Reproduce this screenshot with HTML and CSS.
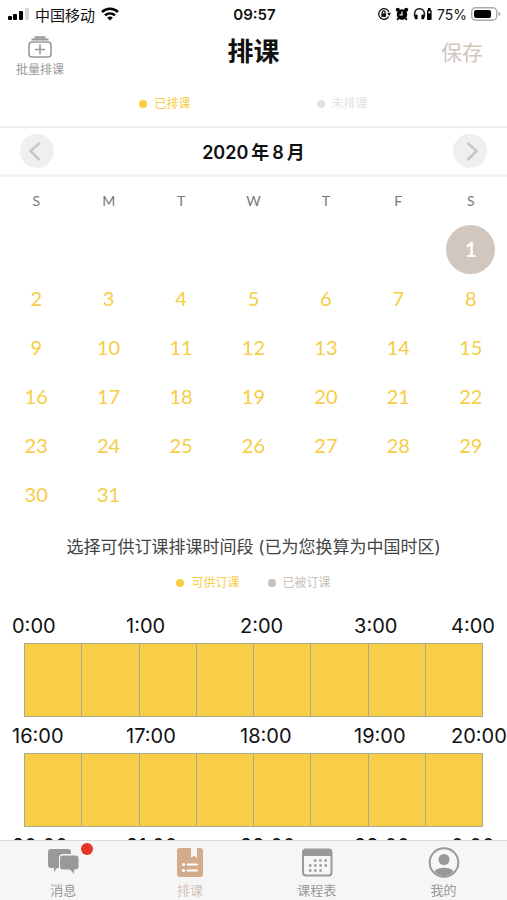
FILE: index.html
```
<!DOCTYPE html>
<html lang="zh-CN">
<head>
    <meta charset="UTF-8">
    <meta name="viewport" content="width=device-width, initial-scale=1.0">
    <title>排课</title>
    <link rel="stylesheet" href="styles.css">
</head>
<body>
    <div class="status-bar">
        <div class="status-left">
            <svg width="21" height="13" viewBox="0 0 21 13">
                <rect x="0" y="8" width="4" height="4" rx="1"/>
                <rect x="5" y="6" width="4" height="6" rx="1"/>
                <rect x="11" y="3" width="4" height="9" rx="1"/>
                <rect x="17" y="0" width="4" height="12" rx="1" fill="#d8d8d8"/>
            </svg>
            <span>中国移动</span>
            <svg width="18" height="14" viewBox="0 0 18 14" fill="none" stroke="#000" stroke-width="2.500">
                <path d="M1 5C5.500 .6 12.500 .6 17 5"/>
                <path d="M4 8.400c2.900-2.700 7.100-2.700 10 0"/>
                <path d="M9 13.500 6.200 10.700c1.600-1.500 4-1.500 5.600 0z" fill="#000" stroke="none"/>
            </svg>
        </div>
        <div class="status-time">09:57</div>
        <div class="status-right">
            <svg width="14" height="14" viewBox="0 0 14 14" fill="none" stroke="#111" stroke-width="1.300">
                <path d="M11.700 9.500A5.300 5.300 0 1 1 11.900 5"/>
                <path d="m10 6 4-.3-1.800 3.300z" fill="#111" stroke="none"/>
                <rect x="4.300" y="6.300" width="4.800" height="3.600" fill="#111" stroke="none"/>
                <path d="M5.300 6.500V5.300a1.400 1.400 0 0 1 2.800 0v1.200"/>
            </svg>
            <svg width="14" height="14" viewBox="0 0 14 14">
                <circle cx="7" cy="7.500" r="5.200"/>
                <circle cx="2.800" cy="2.800" r="2"/>
                <circle cx="11.200" cy="2.800" r="2"/>
                <path d="m3.500 11-1.300 2M10.500 11l1.300 2" stroke="#000" stroke-width="1.600"/>
                <path d="M7 4.500v3.300H4.500" fill="none" stroke="#fff" stroke-width="1.200"/>
            </svg>
            <svg width="20" height="14" viewBox="0 0 20 14">
                <path d="M3.500 12C.3 9 .8 1.800 6.500 1.800S12.700 9 9.500 12" fill="none" stroke="#222" stroke-width="1.500"/>
                <rect x="2" y="7.500" width="2.600" height="4.800" rx="1"/>
                <rect x="8.400" y="7.500" width="2.600" height="4.800" rx="1"/>
                <rect x="14" y="3" width="4.600" height="10" rx="1"/>
                <rect x="15" y="1" width="2.600" height="2.500"/>
                <rect x="15.300" y="4.300" width="2" height="2" fill="#fff"/>
            </svg>
            <span>75%</span>
            <svg width="30" height="14" viewBox="0 0 30 14">
                <rect x=".7" y=".7" width="25" height="12.600" rx="4" fill="none" stroke="#aaa" stroke-width="1.400"/>
                <rect x="3" y="3" width="17" height="8" rx="2"/>
                <path d="M27.500 4.500c2.400.8 2.400 4.200 0 5z" fill="#aaa"/>
            </svg>
        </div>
    </div>

    <header class="header">
        <button type="button" class="batch-btn">
            <svg width="24" height="22" viewBox="0 0 24 22" fill="none" stroke="#999" stroke-width="1.600">
                <rect x="1" y="6" width="22" height="15" rx="3"/>
                <path d="M3.500 3.600h17M6.500 1.200h11" stroke-width="2"/>
                <path d="M12 8.500v10M7 13.500h10"/>
            </svg>
            <span>批量排课</span>
        </button>
        <h1>排课</h1>
        <button type="button" class="save-btn">保存</button>
    </header>

    <main class="content">
        <div class="legend legend-days">
            <span class="legend-item open">已排课</span>
            <span class="legend-item empty">未排课</span>
        </div>

        <div class="month-nav">
            <button type="button" class="nav-btn" aria-label="上个月">
                <svg width="34" height="34" viewBox="0 0 34 34" fill="none" stroke="#c6c6c6" stroke-width="2.500">
                    <path d="m19.500 9-9 8 9 9"/>
                </svg>
            </button>
            <h2><span>2020</span><span>年</span><span>8</span><span>月</span></h2>
            <button type="button" class="nav-btn" aria-label="下个月">
                <svg width="34" height="34" viewBox="0 0 34 34" fill="none" stroke="#c6c6c6" stroke-width="2.500">
                    <path d="m14.500 9 9 8-9 9"/>
                </svg>
            </button>
        </div>

        <table class="calendar">
            <thead>
                <tr><th>S</th><th>M</th><th>T</th><th>W</th><th>T</th><th>F</th><th>S</th></tr>
            </thead>
            <tbody>
                <tr>
                    <td></td><td></td><td></td><td></td><td></td><td></td>
                    <td><button type="button" class="day selected">1</button></td>
                </tr>
                <tr>
                    <td><button type="button" class="day">2</button></td>
                    <td><button type="button" class="day">3</button></td>
                    <td><button type="button" class="day">4</button></td>
                    <td><button type="button" class="day">5</button></td>
                    <td><button type="button" class="day">6</button></td>
                    <td><button type="button" class="day">7</button></td>
                    <td><button type="button" class="day">8</button></td>
                </tr>
                <tr>
                    <td><button type="button" class="day">9</button></td>
                    <td><button type="button" class="day">10</button></td>
                    <td><button type="button" class="day">11</button></td>
                    <td><button type="button" class="day">12</button></td>
                    <td><button type="button" class="day">13</button></td>
                    <td><button type="button" class="day">14</button></td>
                    <td><button type="button" class="day">15</button></td>
                </tr>
                <tr>
                    <td><button type="button" class="day">16</button></td>
                    <td><button type="button" class="day">17</button></td>
                    <td><button type="button" class="day">18</button></td>
                    <td><button type="button" class="day">19</button></td>
                    <td><button type="button" class="day">20</button></td>
                    <td><button type="button" class="day">21</button></td>
                    <td><button type="button" class="day">22</button></td>
                </tr>
                <tr>
                    <td><button type="button" class="day">23</button></td>
                    <td><button type="button" class="day">24</button></td>
                    <td><button type="button" class="day">25</button></td>
                    <td><button type="button" class="day">26</button></td>
                    <td><button type="button" class="day">27</button></td>
                    <td><button type="button" class="day">28</button></td>
                    <td><button type="button" class="day">29</button></td>
                </tr>
                <tr>
                    <td><button type="button" class="day">30</button></td>
                    <td><button type="button" class="day">31</button></td>
                    <td></td><td></td><td></td><td></td><td></td>
                </tr>
            </tbody>
        </table>

        <p class="hint">选择可供订课排课时间段 (已为您换算为中国时区)</p>

        <div class="legend legend-slots">
            <span class="legend-item open">可供订课</span>
            <span class="legend-item booked">已被订课</span>
        </div>

        <section class="slot-group">
            <div class="hours">
                <span>0:00</span><span>1:00</span><span>2:00</span><span>3:00</span><span>4:00</span>
            </div>
            <div class="slots">
                <button type="button" aria-label="0:00"></button>
                <button type="button" aria-label="0:30"></button>
                <button type="button" aria-label="1:00"></button>
                <button type="button" aria-label="1:30"></button>
                <button type="button" aria-label="2:00"></button>
                <button type="button" aria-label="2:30"></button>
                <button type="button" aria-label="3:00"></button>
                <button type="button" aria-label="3:30"></button>
            </div>
        </section>

        <section class="slot-group">
            <div class="hours">
                <span>16:00</span><span>17:00</span><span>18:00</span><span>19:00</span><span>20:00</span>
            </div>
            <div class="slots">
                <button type="button" aria-label="16:00"></button>
                <button type="button" aria-label="16:30"></button>
                <button type="button" aria-label="17:00"></button>
                <button type="button" aria-label="17:30"></button>
                <button type="button" aria-label="18:00"></button>
                <button type="button" aria-label="18:30"></button>
                <button type="button" aria-label="19:00"></button>
                <button type="button" aria-label="19:30"></button>
            </div>
        </section>

        <section class="slot-group">
            <div class="hours">
                <span>20:00</span><span>21:00</span><span>22:00</span><span>23:00</span><span>0:00</span>
            </div>
        </section>
    </main>

    <nav class="tab-bar">
        <a href="#messages" class="tab">
            <span class="tab-icon">
                <svg width="32" height="32" viewBox="0 0 32 32" fill="#999">
                    <path d="M4 2h17a3 3 0 0 1 3 3v2H16a4 4 0 0 0-4 4v10H10l-3 4v-4H4a3 3 0 0 1-3-3V5a3 3 0 0 1 3-3z"/>
                    <path d="M16 8.500h12.500a3 3 0 0 1 3 3v8a3 3 0 0 1-3 3H27v4.500l-4-4.500h-7a3 3 0 0 1-3-3v-8a3 3 0 0 1 3-3z"/>
                </svg>
                <i class="badge"></i>
            </span>
            <span>消息</span>
        </a>
        <a href="#schedule" class="tab active">
            <span class="tab-icon">
                <svg width="32" height="32" viewBox="0 0 32 32">
                    <path d="M6 1h11v10l3-2.500 3 2.500V1h3a3 3 0 0 1 3 3v23a3 3 0 0 1-3 3H6a3 3 0 0 1-3-3V4a3 3 0 0 1 3-3z" fill="#d3ac8b"/>
                    <path d="M13.500 17.500H23M13.500 23.500H23" stroke="#fff" stroke-width="1.800" stroke-linecap="round"/>
                    <circle cx="9.500" cy="17.500" r="1.600" fill="#fff"/>
                    <circle cx="9.500" cy="23.500" r="1.600" fill="#fff"/>
                </svg>
            </span>
            <span>排课</span>
        </a>
        <a href="#timetable" class="tab">
            <span class="tab-icon">
                <svg width="32" height="32" viewBox="0 0 32 32">
                    <rect x="2" y="2.500" width="28.500" height="26" rx="3" fill="none" stroke="#999" stroke-width="2"/>
                    <path d="M2 9V5.500a3 3 0 0 1 3-3h22.500a3 3 0 0 1 3 3V9z" fill="#999"/>
                    <path d="M13 13.500h14M8 18.500h18M8 23.500h14" stroke="#999" stroke-width="2.400" stroke-dasharray="2.400 2.800"/>
                </svg>
            </span>
            <span>课程表</span>
        </a>
        <a href="#mine" class="tab">
            <span class="tab-icon">
                <svg width="32" height="32" viewBox="0 0 32 32">
                    <circle cx="16" cy="15.500" r="14.300" fill="none" stroke="#999" stroke-width="2"/>
                    <circle cx="16" cy="12.500" r="5.500" fill="#999"/>
                    <path d="M6.200 24.200c4.500-4.600 15.100-4.600 19.600 0-4.600 6.300-15 6.300-19.600 0z" fill="#999"/>
                </svg>
            </span>
            <span>我的</span>
        </a>
    </nav>
</body>
</html>
```
FILE: styles.css
```
* {
    margin: 0;
    padding: 0;
    box-sizing: border-box;
}

body {
    font-family: Inter, "Noto Sans CJK SC", sans-serif;
    background: #fff;
    color: #111;
    height: 100vh;
    display: flex;
    flex-direction: column;
    overflow: hidden;
}

button {
    font-family: inherit;
    background: none;
    border: none;
    cursor: pointer;
}

svg {
    display: block;
    flex-shrink: 0;
}

/* status bar */
.status-bar {
    display: grid;
    grid-template-columns: 1fr auto 1fr;
    align-items: center;
    height: 28px;
    padding: 0 6px 0 8px;
    font-size: 15px;
    flex-shrink: 0;
}

.status-left,
.status-right {
    display: flex;
    align-items: center;
    gap: 6px;
}

.status-right {
    justify-content: flex-end;
    gap: 4px;
    font-size: 14px;
}

.status-time {
    font-weight: 600;
}

/* header */
.header {
    display: grid;
    grid-template-columns: 1fr auto 1fr;
    align-items: center;
    height: 56px;
    padding: 0 16px;
    flex-shrink: 0;
}

.header h1 {
    font-size: 26px;
    line-height: 36px;
    font-weight: 700;
    margin-bottom: 8px;
}

.batch-btn {
    justify-self: start;
    display: flex;
    flex-direction: column;
    align-items: center;
    gap: 4px;
    padding-top: 2px;
    font-size: 12px;
    line-height: 16px;
    color: #999;
}

.save-btn {
    justify-self: end;
    margin: 0 8px 6px 0;
    font-size: 21px;
    line-height: 30px;
    color: #cfc6be;
}

.content {
    flex: 1;
    min-height: 0;
    overflow: hidden;
}

/* legends */
.legend {
    display: flex;
    justify-content: center;
    font-size: 12px;
    line-height: 16px;
}

.legend-days {
    gap: 126px;
    padding: 12px 0 14px;
}

.legend-slots {
    gap: 28px;
    padding-bottom: 16px;
}

.legend-item {
    display: flex;
    align-items: center;
    gap: 7px;
}

.legend-item::before {
    content: "";
    width: 8px;
    height: 8px;
    border-radius: 50%;
    background: currentColor;
}

.open {
    color: #f6cd45;
}

.empty {
    color: #e2e2e2;
}

.booked {
    color: #c8bfb7;
}

/* calendar */
.month-nav {
    display: flex;
    align-items: center;
    justify-content: space-between;
    height: 51px;
    padding: 0 20px;
    border-top: 2px solid #ededed;
    border-bottom: 3px solid #f2f2f2;
}

.month-nav h2 {
    display: flex;
    align-items: baseline;
    gap: 3px;
    font-size: 18px;
    font-weight: 600;
}

.nav-btn {
    width: 34px;
    height: 34px;
    border-radius: 50%;
    background: #efefef;
}

.calendar {
    width: 100%;
    table-layout: fixed;
    border-collapse: collapse;
    font-family: Lato, sans-serif;
    text-align: center;
}

.calendar th {
    height: 48px;
    padding-bottom: 2px;
    font-size: 14px;
    font-weight: 400;
    color: #777;
}

.calendar td {
    height: 49px;
}

.day {
    display: block;
    width: 49px;
    height: 49px;
    margin: 0 auto;
    padding-bottom: 2px;
    border-radius: 50%;
    font-size: 20px;
    color: #f6cd45;
}

.day.selected {
    background: #d1c7be;
    color: #fff;
    font-weight: 700;
}

.hint {
    padding: 14px 0;
    font-size: 17px;
    line-height: 28px;
    text-align: center;
    color: #444;
}

/* time slots */
.hours {
    display: grid;
    grid-template-columns: 20fr 20fr 20fr 17fr 56px;
    padding: 2px 0 0 12px;
    font-size: 20px;
    line-height: 34px;
}

.slots {
    display: flex;
    height: 74px;
    margin: 0 24px;
    border-left: 1px solid #aaa78f;
}

.slots button {
    flex: 1;
    background: #f7ce46;
    border: 1px solid #aaa78f;
    border-left: none;
}

/* bottom tabs */
.tab-bar {
    display: flex;
    height: 60px;
    background: #f6f6f6;
    border-top: 1px solid #d9d9d9;
    flex-shrink: 0;
}

.tab {
    flex: 1;
    display: flex;
    flex-direction: column;
    align-items: center;
    padding-top: 6px;
    font-size: 13px;
    line-height: 18px;
    color: #999;
    text-decoration: none;
}

.tab.active {
    color: #d1c4b8;
}

.tab-icon {
    position: relative;
    margin-bottom: 2px;
}

.badge {
    position: absolute;
    top: -4px;
    right: -14px;
    width: 12px;
    height: 12px;
    border-radius: 50%;
    background: #e63428;
}
```
